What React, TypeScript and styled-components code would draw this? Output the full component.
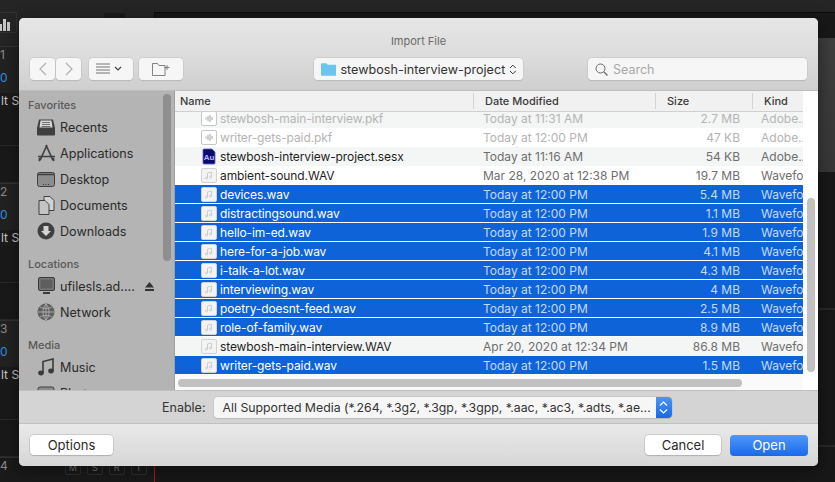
import React from "react";
import styled, { createGlobalStyle } from "styled-components";

const GlobalStyle = createGlobalStyle`
  html, body {
    margin: 0;
    padding: 0;
    background: #1c1c1c;
    overflow: hidden;
  }
`;

type FileRow = {
  name: string;
  date: string;
  size: string;
  kind: string;
  icon: "pkf" | "au" | "wav";
  dim?: boolean;
  selected?: boolean;
};

const files: FileRow[] = [
  { name: "stewbosh-main-interview.pkf", date: "Today at 11:31 AM", size: "2.7 MB", kind: "Adobe..", icon: "pkf", dim: true },
  { name: "writer-gets-paid.pkf", date: "Today at 12:00 PM", size: "47 KB", kind: "Adobe..", icon: "pkf", dim: true },
  { name: "stewbosh-interview-project.sesx", date: "Today at 11:16 AM", size: "54 KB", kind: "Adobe..", icon: "au" },
  { name: "ambient-sound.WAV", date: "Mar 28, 2020 at 12:38 PM", size: "19.7 MB", kind: "Wavefo", icon: "wav" },
  { name: "devices.wav", date: "Today at 12:00 PM", size: "5.4 MB", kind: "Wavefo", icon: "wav", selected: true },
  { name: "distractingsound.wav", date: "Today at 12:00 PM", size: "1.1 MB", kind: "Wavefo", icon: "wav", selected: true },
  { name: "hello-im-ed.wav", date: "Today at 12:00 PM", size: "1.9 MB", kind: "Wavefo", icon: "wav", selected: true },
  { name: "here-for-a-job.wav", date: "Today at 12:00 PM", size: "4.1 MB", kind: "Wavefo", icon: "wav", selected: true },
  { name: "i-talk-a-lot.wav", date: "Today at 12:00 PM", size: "4.3 MB", kind: "Wavefo", icon: "wav", selected: true },
  { name: "interviewing.wav", date: "Today at 12:00 PM", size: "4 MB", kind: "Wavefo", icon: "wav", selected: true },
  { name: "poetry-doesnt-feed.wav", date: "Today at 12:00 PM", size: "2.5 MB", kind: "Wavefo", icon: "wav", selected: true },
  { name: "role-of-family.wav", date: "Today at 12:00 PM", size: "8.9 MB", kind: "Wavefo", icon: "wav", selected: true },
  { name: "stewbosh-main-interview.WAV", date: "Apr 20, 2020 at 12:34 PM", size: "86.8 MB", kind: "Wavefo", icon: "wav" },
  { name: "writer-gets-paid.wav", date: "Today at 12:00 PM", size: "1.5 MB", kind: "Wavefo", icon: "wav", selected: true },
];

function FileIcon({ type }: { type: FileRow["icon"] }) {
  if (type === "au") {
    return (
      <svg width="16" height="17" viewBox="0 0 16 17">
        <path d="M3 1h8l3 3v11a1 1 0 0 1-1 1H3a1 1 0 0 1-1-1V2a1 1 0 0 1 1-1z" fill="#0b0b6b" stroke="#5a5ad0" strokeWidth="0.8" />
        <text x="8" y="12" fontSize="8" fontWeight="700" fontFamily="Liberation Sans, sans-serif" fill="#b9b9ff" textAnchor="middle">Au</text>
      </svg>
    );
  }
  const pkf = type === "pkf";
  return (
    <svg width="16" height="15" viewBox="0 0 16 15">
      <rect x="0.5" y="0.5" width="15" height="14" rx="1.5" fill={pkf ? "#ffffff" : "#f3f3f3"} stroke={pkf ? "#c6c6c6" : "#d2d2d2"} />
      {pkf ? (
        <path d="M5 6.5v2M7 5v5M9 4v7M11 6v3" stroke="#a2a2a2" strokeWidth="1" />
      ) : (
        <path d="M6.5 10V5l4-.8V9M6.5 10a1 1 0 1 1-1-1h1M10.5 9a1 1 0 1 1-1-1h1" fill="none" stroke="#c4c4c4" strokeWidth="0.8" />
      )}
    </svg>
  );
}

const sideIcons: Record<string, React.ReactNode> = {
  recents: (
    <svg width="18" height="17" viewBox="0 0 18 17">
      <path d="M0 9l2-8.500h14l2 8.500v6.500a1 1 0 0 1-1 1H1a1 1 0 0 1-1-1z" fill="#3f3f3f" />
      <path d="M3.500 1.500h11l1 7h-13z" fill="#d8d8d8" />
      <path d="M5 3.500h8M5 5.500h8M4.500 7.500h9" stroke="#555" strokeWidth="0.8" />
    </svg>
  ),
  apps: (
    <svg width="19" height="18" viewBox="0 0 19 18">
      <path d="M10 1L5 12M9 1l5 11M1 12.500h17" fill="none" stroke="#404040" strokeWidth="1.700" />
      <path d="M2 17l3-4.500M17 17l-3-4.500" stroke="#404040" strokeWidth="1.400" />
      <circle cx="3" cy="15" r="1.500" fill="#404040" />
      <circle cx="16" cy="15" r="1.500" fill="#404040" />
    </svg>
  ),
  desktop: (
    <svg width="18" height="15" viewBox="0 0 18 15">
      <rect x="0.500" y="0.500" width="17" height="14" rx="2" fill="#8d8d8d" stroke="#404040" />
      <path d="M1 2.500h16" stroke="#404040" strokeWidth="1.500" />
      <path d="M6 12.500h1M8.500 12.500h1M11 12.500h1" stroke="#333" />
    </svg>
  ),
  documents: (
    <svg width="17" height="19" viewBox="0 0 17 19">
      <path d="M6 .5h6l4 4v10H6z" fill="#d2d2d2" stroke="#404040" />
      <path d="M1 4.500h6l4 4v10H1z" fill="#c4c4c4" stroke="#404040" />
    </svg>
  ),
  downloads: (
    <svg width="18" height="18" viewBox="0 0 18 18">
      <circle cx="9" cy="9" r="8.500" fill="#404040" />
      <path d="M6.500 4h5v5h2.500L9 14 4 9h2.500z" fill="#d4d4d4" />
    </svg>
  ),
  server: (
    <svg width="17" height="18" viewBox="0 0 17 18">
      <rect x="0.500" y="0.500" width="16" height="13" rx="1.500" fill="#777" stroke="#3a3a3a" />
      <rect x="2.500" y="2.500" width="12" height="9" fill="#5e5e5e" />
      <path d="M5 16h7" stroke="#3a3a3a" strokeWidth="2" />
    </svg>
  ),
  network: (
    <svg width="18" height="18" viewBox="0 0 18 18">
      <circle cx="9" cy="9" r="8.500" fill="#5f5f5f" />
      <path d="M9 1v16M1 9h16M3 4c3 2 9 2 12 0M3 14c3-2 9-2 12 0M9 1c-4 4-4 12 0 16M9 1c4 4 4 12 0 16" fill="none" stroke="#b8b8b8" strokeWidth="0.8" />
    </svg>
  ),
  music: (
    <svg width="16" height="18" viewBox="0 0 16 18">
      <path d="M5 15V3.500l10-2.500v12" fill="none" stroke="#3a3a3a" strokeWidth="1.600" />
      <ellipse cx="3" cy="15" rx="2.800" ry="2.400" fill="#3a3a3a" />
      <ellipse cx="13" cy="13" rx="2.800" ry="2.400" fill="#3a3a3a" />
    </svg>
  ),
  photos: (
    <svg width="18" height="15" viewBox="0 0 18 15">
      <rect x="1" y="1" width="16" height="13" rx="2" fill="#8d8d8d" stroke="#404040" />
    </svg>
  ),
};

const favorites = [
  { label: "Recents", icon: "recents" },
  { label: "Applications", icon: "apps" },
  { label: "Desktop", icon: "desktop" },
  { label: "Documents", icon: "documents" },
  { label: "Downloads", icon: "downloads" },
];

const trackNumbers = ["1", "2", "3"];
const transportKeys = ["M", "S", "R", "I"];

export default function App() {
  return (
    <>
      <GlobalStyle />
      <Stage>
        <TopBar />
        <Workspace>
          <TrackColumn>
            <ColumnHead>
              <MeterBox>
                <svg viewBox="0 0 12 14" width="12" height="14">
                  <path d="M0 7h3v7H0zM4 2h3v12H4zM8 5h3v9H8z" fill="#c8c8c8" />
                </svg>
              </MeterBox>
              <HeadSquare />
            </ColumnHead>
            {trackNumbers.map((num) => (
              <Track key={num}>
                <TrackHead>
                  <TrackNum>{num}</TrackNum>
                  <TrackValue>0</TrackValue>
                </TrackHead>
                <TrackLabel>lt St</TrackLabel>
                <Lane />
                <Lane />
              </Track>
            ))}
            <TransportRow>
              <TrackNum>4</TrackNum>
              <TransportKeys>
                {transportKeys.map((k) => (
                  <TransportKey key={k}>{k}</TransportKey>
                ))}
              </TransportKeys>
            </TransportRow>
          </TrackColumn>
          <Timeline>
            <Clip />
            <TimelineLane $height={138} />
            <TimelineLane $height={137} />
            <PlayheadLane />
          </Timeline>
        </Workspace>
        <Dialog>
          <TitleBar>Import File</TitleBar>
          <Toolbar>
            <NavGroup>
              <NavButton>
                <svg width="10" height="16" viewBox="0 0 10 16">
                  <path d="M8 2L2 8l6 6" fill="none" stroke="#b0b0b0" strokeWidth="1.200" />
                </svg>
              </NavButton>
              <NavButton>
                <svg width="10" height="16" viewBox="0 0 10 16">
                  <path d="M2 2l6 6-6 6" fill="none" stroke="#b0b0b0" strokeWidth="1.200" />
                </svg>
              </NavButton>
            </NavGroup>
            <ViewButton>
              <svg width="30" height="12" viewBox="0 0 30 12">
                <path d="M0 1h14M0 4h14M0 7h14M0 10h14" stroke="#555" strokeWidth="0.800" />
                <path d="M19 4l3 3 3-3" fill="none" stroke="#444" strokeWidth="1.200" />
              </svg>
            </ViewButton>
            <FolderButton>
              <svg width="18" height="13" viewBox="0 0 18 13">
                <path d="M.5 12.500V.5h5l1.500 2h6v10z" fill="none" stroke="#666" strokeWidth="0.800" />
                <path d="M15 2v5M12.500 4.500h5" stroke="#666" strokeWidth="0.800" />
              </svg>
            </FolderButton>
            <PathSelect>
              <svg width="16" height="14" viewBox="0 0 16 14">
                <path d="M0 2a1 1 0 0 1 1-1h4.500l1.500 1.500h8a1 1 0 0 1 1 1V13a1 1 0 0 1-1 1H1a1 1 0 0 1-1-1z" fill="#6cc4f0" />
              </svg>
              <PathName>stewbosh-interview-project</PathName>
              <svg width="8" height="13" viewBox="0 0 8 13">
                <path d="M1 5l3-3 3 3M1 8l3 3 3-3" fill="none" stroke="#333" strokeWidth="1" />
              </svg>
            </PathSelect>
            <SearchBox>
              <svg width="13" height="13" viewBox="0 0 13 13">
                <circle cx="5.500" cy="5.500" r="4.500" fill="none" stroke="#666" />
                <path d="M9 9l3.500 3.500" stroke="#666" strokeWidth="1.200" />
              </svg>
              <SearchText>Search</SearchText>
            </SearchBox>
          </Toolbar>
          <Body>
            <Sidebar>
              <SideHeading>Favorites</SideHeading>
              {favorites.map((f) => (
                <SideItem key={f.label}>
                  <SideIcon>{sideIcons[f.icon]}</SideIcon>
                  {f.label}
                </SideItem>
              ))}
              <SideHeading $gap>Locations</SideHeading>
              <SideItem>
                <SideIcon>{sideIcons.server}</SideIcon>
                ufilesls.ad....
                <EjectIcon width="9" height="9" viewBox="0 0 9 9">
                  <path d="M4.500 0L9 5.500H0zM0 7h9v2H0z" fill="#333" />
                </EjectIcon>
              </SideItem>
              <SideItem>
                <SideIcon>{sideIcons.network}</SideIcon>
                Network
              </SideItem>
              <SideHeading $gap>Media</SideHeading>
              <SideItem>
                <SideIcon>{sideIcons.music}</SideIcon>
                Music
              </SideItem>
              <SideItem>
                <SideIcon>{sideIcons.photos}</SideIcon>
                Photos
              </SideItem>
              <SideThumb />
            </Sidebar>
            <ListPane>
              <HeaderRow>
                <HeadCell>Name</HeadCell>
                <HeadCell $divider>Date Modified</HeadCell>
                <HeadCell $divider>Size</HeadCell>
                <HeadCell $divider>Kind</HeadCell>
              </HeaderRow>
              <Rows>
                {files.map((f, i) => (
                  <Row key={f.name} $selected={f.selected} $striped={i % 2 === 0} $dim={f.dim}>
                    <NameCell>
                      <FileIcon type={f.icon} />
                      <span>{f.name}</span>
                    </NameCell>
                    <DateCell>{f.date}</DateCell>
                    <SizeCell>{f.size}</SizeCell>
                    <KindCell>{f.kind}</KindCell>
                  </Row>
                ))}
              </Rows>
              <HScrollTrack>
                <HScrollThumb />
              </HScrollTrack>
              <VScrollThumb />
            </ListPane>
          </Body>
          <EnableBar>
            <EnableLabel>Enable:</EnableLabel>
            <EnableSelect>
              <EnableText>All Supported Media (*.264, *.3g2, *.3gp, *.3gpp, *.aac, *.ac3, *.adts, *.ae...</EnableText>
              <EnableArrow>
                <svg width="9" height="15" viewBox="0 0 9 15">
                  <path d="M1 5.500l3.500-3.500 3.500 3.500M1 9.500l3.500 3.500 3.500-3.500" fill="none" stroke="#fff" strokeWidth="1.200" />
                </svg>
              </EnableArrow>
            </EnableSelect>
          </EnableBar>
          <Footer>
            <PlainButton $width={83}>Options</PlainButton>
            <FooterRight>
              <PlainButton $width={76}>Cancel</PlainButton>
              <PrimaryButton>Open</PrimaryButton>
            </FooterRight>
          </Footer>
        </Dialog>
      </Stage>
    </>
  );
}

const Stage = styled.div`
  position: relative;
  width: 835px;
  height: 482px;
  overflow: hidden;
  display: flex;
  flex-direction: column;
  background: #1c1c1c;
  font-family: "Inter", "Liberation Sans", sans-serif;
`;

const TopBar = styled.div`
  height: 12px;
  flex: none;
  background: #252525;
`;

const Workspace = styled.div`
  flex: 1;
  display: flex;
  min-height: 0;
`;

const TrackColumn = styled.div`
  width: 154px;
  flex: none;
  background: #1a1a1a;
`;

const ColumnHead = styled.div`
  height: 34px;
  box-sizing: border-box;
  display: flex;
  align-items: flex-start;
  background: #252525;
`;

const MeterBox = styled.div`
  width: 17px;
  height: 21px;
  box-sizing: border-box;
  margin-right: 87px;
  padding-top: 4px;
  border: 1px solid #333;
  border-left: none;
  border-radius: 0 2px 2px 0;
  svg {
    display: block;
    margin-left: -1px;
  }
`;

const HeadSquare = styled.div`
  width: 21px;
  height: 10px;
  margin-top: 1px;
  border-radius: 2px;
  background: #1b1b1b;
`;

const Track = styled.div`
  height: 137px;
  box-sizing: border-box;
  border-top: 1px solid #333;
  display: flex;
  flex-direction: column;
  font-size: 12px;
`;

const TrackHead = styled.div`
  height: 46px;
  flex: none;
  display: flex;
  flex-direction: column;
  gap: 7px;
  background: #222;
`;

const TrackNum = styled.div`
  color: #8c8c8c;
  height: 16px;
  line-height: 16px;
  font-size: 12px;
`;

const TrackValue = styled.div`
  color: #2f8fe0;
  height: 16px;
  line-height: 16px;
`;

const TrackLabel = styled.div`
  color: #c8c8c8;
  height: 16px;
  line-height: 16px;
  padding-left: 1px;
  white-space: nowrap;
  background: #1b1b1b;
  flex: none;
`;

const Lane = styled.div`
  flex: 1;
  border-bottom: 1px solid #2a2a2a;
  background: #191919;
`;

const TransportRow = styled.div`
  display: flex;
  height: 25px;
  border-top: 1px solid #333;
  box-sizing: border-box;
`;

const TransportKeys = styled.div`
  display: flex;
  gap: 6px;
  margin-left: 57px;
  margin-top: 2px;
`;

const TransportKey = styled.div`
  width: 16px;
  height: 15px;
  box-sizing: border-box;
  border: 1px solid #303030;
  border-radius: 2px;
  font-size: 9px;
  line-height: 13px;
  text-align: center;
  color: #777;
`;

const Timeline = styled.div`
  flex: 1;
  display: flex;
  flex-direction: column;
  border-top: 1px solid #0c0c0c;
  border-left: 1px solid #0c0c0c;
  background: #181818;
`;

const Clip = styled.div`
  height: 134px;
  margin-top: 25px;
  flex: none;
  background: linear-gradient(#3e3e3e, #383838);
`;

const TimelineLane = styled.div<{ $height: number }>`
  height: ${(p) => p.$height}px;
  flex: none;
  box-sizing: border-box;
  border-bottom: 2px solid #292929;
`;

const PlayheadLane = styled.div`
  flex: 1;
  margin-left: -1px;
  border-left: 1px solid #a51c1c;
`;

const Dialog = styled.div`
  position: absolute;
  left: 19px;
  top: 18px;
  width: 799px;
  height: 448px;
  display: flex;
  flex-direction: column;
  border-radius: 5px;
  overflow: hidden;
  background: #d4d4d4;
  box-shadow: 0 4px 18px rgba(0, 0, 0, 0.45);
`;

const TitleBar = styled.div`
  height: 38px;
  padding-top: 17px;
  box-sizing: border-box;
  text-align: center;
  font-size: 11px;
  line-height: 13px;
  color: #6a6a6a;
  background: linear-gradient(#e6e6e6, #dcdcdc);
`;

const Toolbar = styled.div`
  height: 34px;
  padding: 2px 10px 0 11px;
  box-sizing: border-box;
  display: flex;
  align-items: flex-start;
  background: linear-gradient(#dcdcdc, #cfcfcf);
`;

const NavGroup = styled.div`
  display: flex;
  gap: 1px;
  margin-right: 8px;
`;

const ControlBase = styled.div`
  height: 22px;
  box-sizing: border-box;
  background: #f6f6f6;
  border-radius: 4px;
  box-shadow: 0 0 0 0.5px #c0c0c0, 0 1px 1px rgba(0, 0, 0, 0.15);
  display: flex;
  align-items: center;
`;

const NavButton = styled(ControlBase)`
  width: 25px;
  justify-content: center;
`;

const ViewButton = styled(ControlBase)`
  width: 44px;
  justify-content: center;
  margin-right: 6px;
`;

const FolderButton = styled(ControlBase)`
  width: 44px;
  justify-content: center;
  margin-right: 131px;
`;

const PathSelect = styled(ControlBase)`
  width: 209px;
  padding: 0 6px 0 7px;
  gap: 4px;
  margin-right: 65px;
`;

const PathName = styled.span`
  flex: 1;
  font-size: 12.600px;
  color: #333;
  white-space: nowrap;
`;

const SearchBox = styled(ControlBase)`
  width: 219px;
  padding: 0 6px 0 7px;
  gap: 5px;
`;

const SearchText = styled.span`
  font-size: 12.500px;
  color: #a8a8a8;
`;

const Body = styled.div`
  height: 300px;
  display: flex;
  border-top: 1px solid #bdbdbd;
  box-sizing: border-box;
`;

const Sidebar = styled.div`
  position: relative;
  width: 156px;
  flex: none;
  overflow: hidden;
  background: #b4b4b4;
  box-sizing: border-box;
  padding-top: 6px;
  border-right: 1px solid #9f9f9f;
`;

const SideHeading = styled.div<{ $gap?: boolean }>`
  height: 16px;
  line-height: 16px;
  padding-left: 9px;
  font-size: 11px;
  font-weight: 500;
  color: #585858;
  margin-top: ${(p) => (p.$gap ? "12px" : "0")};
  margin-bottom: 1px;
`;

const SideItem = styled.div`
  height: 26px;
  display: flex;
  align-items: center;
  padding-left: 17px;
  font-size: 12.600px;
  color: #2a2a2a;
  white-space: nowrap;
`;

const SideIcon = styled.span`
  width: 20px;
  margin-right: 4px;
  display: flex;
  justify-content: center;
`;

const EjectIcon = styled.svg`
  margin-left: 10px;
`;

const SideThumb = styled.div`
  position: absolute;
  right: 3px;
  top: 3px;
  width: 8px;
  height: 167px;
  border-radius: 4px;
  background: #8f8f8f;
`;

const ListPane = styled.div`
  position: relative;
  flex: 1;
  background: #fff;
  overflow: hidden;
  display: flex;
  flex-direction: column;
`;

const columns = "298px 182px 97px 51px";

const HeaderRow = styled.div`
  display: grid;
  grid-template-columns: ${columns};
  width: 628px;
  height: 21px;
  flex: none;
  position: relative;
  z-index: 1;
  background: #f1f1f1;
  border-bottom: 1px solid #d0d0d0;
  box-sizing: border-box;
`;

const HeadCell = styled.div<{ $divider?: boolean }>`
  font-size: 11px;
  font-weight: 500;
  color: #3a3a3a;
  padding-left: ${(p) => (p.$divider ? "11px" : "5px")};
  border-left: ${(p) => (p.$divider ? "1px solid #d4d4d4" : "none")};
  margin: 2px 0;
  line-height: 16px;
`;

const Rows = styled.div`
  width: 628px;
  height: 266px;
  flex: none;
  overflow: hidden;
  margin-top: -3px;
`;

const Row = styled.div<{ $selected?: boolean; $striped?: boolean; $dim?: boolean }>`
  display: grid;
  grid-template-columns: ${columns};
  height: 19px;
  box-sizing: border-box;
  align-items: center;
  font-size: 12px;
  background: ${(p) => (p.$selected ? "#0f63d8" : p.$striped ? "#f4f5f5" : "#fff")};
  border-bottom: ${(p) => (p.$selected ? "1px solid #fff" : "none")};
  color: ${(p) => (p.$selected ? "#fff" : p.$dim ? "#b4b4b4" : "#1f1f1f")};
  --muted: ${(p) => (p.$selected ? "#c4dafa" : p.$dim ? "#b4b4b4" : "#6e6e6e")};
`;

const NameCell = styled.div`
  display: flex;
  align-items: center;
  gap: 3px;
  padding-left: 26px;
  white-space: nowrap;
  overflow: hidden;
  letter-spacing: -0.1px;
`;

const DateCell = styled.div`
  color: var(--muted);
  padding-left: 10px;
  white-space: nowrap;
`;

const SizeCell = styled.div`
  color: var(--muted);
  text-align: right;
  padding-right: 12px;
`;

const KindCell = styled.div`
  color: var(--muted);
  padding-left: 9px;
  white-space: nowrap;
  overflow: hidden;
`;

const HScrollTrack = styled.div`
  width: 628px;
  flex: 1;
  background: #fafafa;
  padding: 4px 3px 0;
  box-sizing: border-box;
`;

const HScrollThumb = styled.div`
  width: 564px;
  height: 8px;
  border-radius: 4px;
  background: #c1c1c1;
`;

const VScrollThumb = styled.div`
  position: absolute;
  right: 3px;
  top: 107px;
  width: 8px;
  height: 174px;
  border-radius: 4px;
  background: #c1c1c1;
`;

const EnableBar = styled.div`
  height: 34px;
  display: flex;
  align-items: center;
  box-sizing: border-box;
  padding-left: 143px;
  gap: 8px;
  background: #d4d4d4;
  border-top: 1px solid #c0c0c0;
  border-bottom: 1px solid #c0c0c0;
`;

const EnableLabel = styled.span`
  font-size: 12.500px;
  color: #333;
`;

const EnableSelect = styled(ControlBase)`
  width: 458px;
  height: 21px;
  overflow: hidden;
  padding-left: 9px;
  justify-content: space-between;
`;

const EnableText = styled.span`
  font-size: 12.300px;
  color: #333;
  white-space: nowrap;
`;

const EnableArrow = styled.span`
  width: 16px;
  height: 21px;
  flex: none;
  display: flex;
  align-items: center;
  justify-content: center;
  background: linear-gradient(#4c95f6, #1a68ea);
`;

const Footer = styled.div`
  flex: 1;
  display: flex;
  align-items: center;
  justify-content: space-between;
  padding: 0 10px 0 11px;
  background: linear-gradient(#e9e9e9, #d6d6d6);
`;

const FooterRight = styled.div`
  display: flex;
  gap: 9px;
`;

const PlainButton = styled.div<{ $width: number }>`
  width: ${(p) => p.$width}px;
  height: 20px;
  line-height: 20px;
  text-align: center;
  font-size: 13px;
  color: #2a2a2a;
  background: #fff;
  border-radius: 4px;
  box-shadow: 0 0 0 0.5px #b4b4b4, 0 1px 1px rgba(0, 0, 0, 0.2);
`;

const PrimaryButton = styled.div`
  width: 78px;
  height: 21px;
  line-height: 21px;
  text-align: center;
  font-size: 13px;
  color: #fff;
  border-radius: 4px;
  background: linear-gradient(#4f97f8, #1a69ec);
`;
